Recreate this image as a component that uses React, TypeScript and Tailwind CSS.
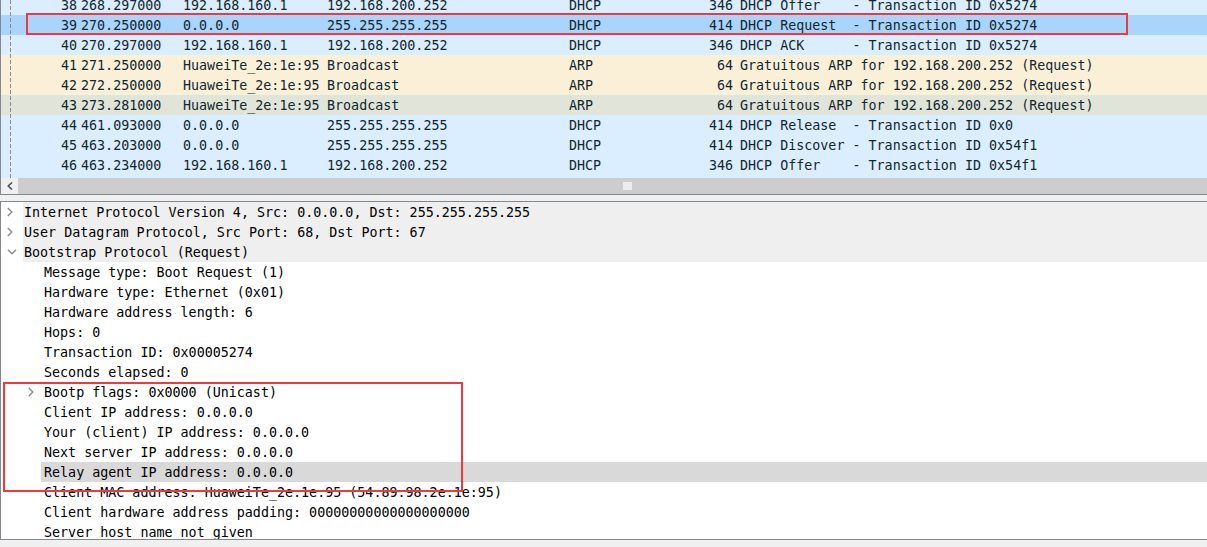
import React from 'react';

type Packet = {
  no: number;
  time: string;
  src: string;
  dst: string;
  proto: string;
  len: number;
  info: string;
  bg: string;
};

const dhcp = 'bg-[#daeeff]';
const arp = 'bg-[#faf0d7]';

const packets: Packet[] = [
  { no: 38, time: '268.297000', src: '192.168.160.1', dst: '192.168.200.252', proto: 'DHCP', len: 346, info: 'DHCP Offer    - Transaction ID 0x5274', bg: dhcp },
  { no: 39, time: '270.250000', src: '0.0.0.0', dst: '255.255.255.255', proto: 'DHCP', len: 414, info: 'DHCP Request  - Transaction ID 0x5274', bg: 'bg-[#a9d4fc]' },
  { no: 40, time: '270.297000', src: '192.168.160.1', dst: '192.168.200.252', proto: 'DHCP', len: 346, info: 'DHCP ACK      - Transaction ID 0x5274', bg: dhcp },
  { no: 41, time: '271.250000', src: 'HuaweiTe_2e:1e:95', dst: 'Broadcast', proto: 'ARP', len: 64, info: 'Gratuitous ARP for 192.168.200.252 (Request)', bg: arp },
  { no: 42, time: '272.250000', src: 'HuaweiTe_2e:1e:95', dst: 'Broadcast', proto: 'ARP', len: 64, info: 'Gratuitous ARP for 192.168.200.252 (Request)', bg: arp },
  { no: 43, time: '273.281000', src: 'HuaweiTe_2e:1e:95', dst: 'Broadcast', proto: 'ARP', len: 64, info: 'Gratuitous ARP for 192.168.200.252 (Request)', bg: 'bg-[#dfe5d9]' },
  { no: 44, time: '461.093000', src: '0.0.0.0', dst: '255.255.255.255', proto: 'DHCP', len: 414, info: 'DHCP Release  - Transaction ID 0x0', bg: dhcp },
  { no: 45, time: '463.203000', src: '0.0.0.0', dst: '255.255.255.255', proto: 'DHCP', len: 414, info: 'DHCP Discover - Transaction ID 0x54f1', bg: dhcp },
  { no: 46, time: '463.234000', src: '192.168.160.1', dst: '192.168.200.252', proto: 'DHCP', len: 346, info: 'DHCP Offer    - Transaction ID 0x54f1', bg: dhcp },
  { no: 47, time: '463.250000', src: '0.0.0.0', dst: '255.255.255.255', proto: 'DHCP', len: 414, info: 'DHCP Request  - Transaction ID 0x54f1', bg: dhcp },
];

type Node = {
  text: string;
  level: 0 | 1;
  arrow?: 'right' | 'down';
  selected?: boolean;
};

const tree: Node[] = [
  { text: 'Internet Protocol Version 4, Src: 0.0.0.0, Dst: 255.255.255.255', level: 0, arrow: 'right' },
  { text: 'User Datagram Protocol, Src Port: 68, Dst Port: 67', level: 0, arrow: 'right' },
  { text: 'Bootstrap Protocol (Request)', level: 0, arrow: 'down' },
  { text: 'Message type: Boot Request (1)', level: 1 },
  { text: 'Hardware type: Ethernet (0x01)', level: 1 },
  { text: 'Hardware address length: 6', level: 1 },
  { text: 'Hops: 0', level: 1 },
  { text: 'Transaction ID: 0x00005274', level: 1 },
  { text: 'Seconds elapsed: 0', level: 1 },
  { text: 'Bootp flags: 0x0000 (Unicast)', level: 1, arrow: 'right' },
  { text: 'Client IP address: 0.0.0.0', level: 1 },
  { text: 'Your (client) IP address: 0.0.0.0', level: 1 },
  { text: 'Next server IP address: 0.0.0.0', level: 1 },
  { text: 'Relay agent IP address: 0.0.0.0', level: 1, selected: true },
  { text: 'Client MAC address: HuaweiTe_2e:1e:95 (54:89:98:2e:1e:95)', level: 1 },
  { text: 'Client hardware address padding: 00000000000000000000', level: 1 },
  { text: 'Server host name not given', level: 1 },
];

function Arrow({ dir }: { dir: 'right' | 'down' }) {
  if (dir === 'down') {
    return (
      <svg width="10" height="6" viewBox="0 0 10 6" className="block">
        <path d="M1 0.8 L5 4.8 L9 0.8" fill="none" stroke="#8a8a8a" strokeWidth="1.4" />
      </svg>
    );
  }
  return (
    <svg width="6" height="10" viewBox="0 0 6 10" className="block">
      <path d="M0.8 1 L4.8 5 L0.8 9" fill="none" stroke="#8a8a8a" strokeWidth="1.4" />
    </svg>
  );
}

export default function App() {
  return (
    <div
      className="relative w-[1207px] h-[547px] overflow-hidden bg-[#f0f0f0] text-[13.35px] leading-[20px]"
      style={{ fontFamily: '"DejaVu Sans Mono", "Liberation Mono", monospace' }}
    >
      {/* Packet list */}
      <div className="h-[195px] border-l border-b border-[#828790] flex flex-col">
        <div className="relative h-[178px] overflow-hidden bg-[#daeeff]">
          <div className="-mt-[5px]">
            {packets.map((p) => (
              <div key={p.no} className={`flex h-[20px] items-center pt-[2px] whitespace-pre text-[#12272e] ${p.bg}`}>
                <span className="w-[76px] text-right">{p.no}</span>
                <span className="w-[106px] pl-[4px]">{p.time}</span>
                <span className="w-[144px]">{p.src}</span>
                <span className="w-[242px]">{p.dst}</span>
                <span className="w-[120px]">{p.proto}</span>
                <span className="w-[44px] text-right">{p.len}</span>
                <span className="pl-[7px]">{p.info}</span>
              </div>
            ))}
          </div>
          <svg className="absolute left-[9px] top-0" width="2" height="178">
            <line x1="0.5" y1="0" x2="0.5" y2="178" stroke="#8c8c8c" strokeWidth="1" strokeDasharray="4 2" />
          </svg>
        </div>
        {/* horizontal scrollbar */}
        <div className="flex h-[16px]">
          <div className="w-[17px] bg-[#f0f0f0] flex items-center justify-center">
            <svg width="6" height="8" viewBox="0 0 6 8" className="block">
              <path d="M5 0.5 L1.3 4 L5 7.5" fill="none" stroke="#505050" strokeWidth="1.6" />
            </svg>
          </div>
          <div className="flex-1 bg-[#cdcdcd] flex items-center">
            <div className="ml-[605px] w-[9px] h-[8px] bg-[#ececec]" />
          </div>
        </div>
      </div>

      {/* splitter */}
      <div className="h-[6px]" />

      {/* Packet details */}
      <div className="h-[339px] border-l border-y border-[#828790] bg-white overflow-hidden">
        {tree.map((n, i) => (
          <div key={i} className="flex h-[20px] text-black whitespace-pre">
            {n.level === 0 ? (
              <div className="w-[22px] shrink-0 flex items-center pl-[6px]">
                {n.arrow && <Arrow dir={n.arrow} />}
              </div>
            ) : (
              <div className="w-[40px] shrink-0 flex items-center pl-[27px]">
                {n.arrow && <Arrow dir={n.arrow} />}
              </div>
            )}
            <div
              className={`flex-1 flex items-center pt-[2px] ${
                n.level === 0 ? 'bg-[#efefef] pl-[1px]' : 'pl-[3px]'
              } ${n.selected ? 'bg-[#d9d9d9]' : ''}`}
            >
              {n.text}
            </div>
          </div>
        ))}
      </div>

      {/* annotation boxes */}
      <div className="absolute left-[26px] top-[13px] w-[1102px] h-[22px] border-2 border-[#ee3a3f]" />
      <div className="absolute left-[3px] top-[382px] w-[460px] h-[110px] border-2 border-[#ee3a3f]" />
    </div>
  );
}
